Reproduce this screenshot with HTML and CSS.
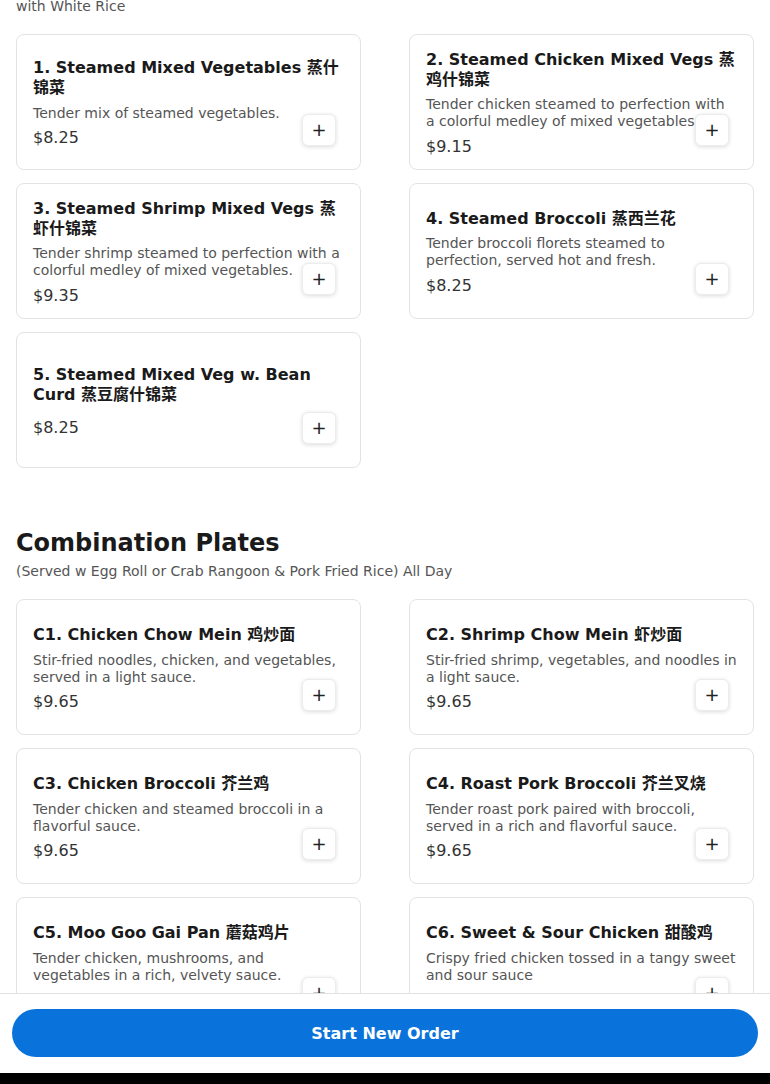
FILE: index.html
```html
<!DOCTYPE html>
<html lang="en">
<head>
<meta charset="utf-8">
<title>Menu</title>
<link rel="stylesheet" href="styles.css">
</head>
<body>
<main class="page">
  <section class="section section-first">
    <p class="section-sub sub-tail">with White Rice</p>
    <div class="grid">
      <article class="card">
        <h3 class="item-name">1. Steamed Mixed Vegetables <span class="zh" lang="zh">蒸什锦菜</span></h3>
        <p class="item-desc">Tender mix of steamed vegetables.</p>
        <p class="item-price">$8.25</p>
        <button class="add-btn" aria-label="Add">+</button>
      </article>
      <article class="card">
        <h3 class="item-name">2. Steamed Chicken Mixed Vegs <span class="zh" lang="zh">蒸鸡什锦菜</span></h3>
        <p class="item-desc">Tender chicken steamed to perfection with a colorful medley of mixed vegetables.</p>
        <p class="item-price">$9.15</p>
        <button class="add-btn" aria-label="Add">+</button>
      </article>
      <article class="card">
        <h3 class="item-name">3. Steamed Shrimp Mixed Vegs <span class="zh" lang="zh">蒸虾什锦菜</span></h3>
        <p class="item-desc">Tender shrimp steamed to perfection with a colorful medley of mixed vegetables.</p>
        <p class="item-price">$9.35</p>
        <button class="add-btn" aria-label="Add">+</button>
      </article>
      <article class="card">
        <h3 class="item-name">4. Steamed Broccoli <span class="zh" lang="zh">蒸西兰花</span></h3>
        <p class="item-desc">Tender broccoli florets steamed to perfection, served hot and fresh.</p>
        <p class="item-price">$8.25</p>
        <button class="add-btn" aria-label="Add">+</button>
      </article>
      <article class="card">
        <h3 class="item-name">5. Steamed Mixed Veg w. Bean Curd <span class="zh" lang="zh">蒸豆腐什锦菜</span></h3>
        <p class="item-desc"></p>
        <p class="item-price">$8.25</p>
        <button class="add-btn" aria-label="Add">+</button>
      </article>
    </div>
  </section>

  <section class="section">
    <h2 class="section-title">Combination Plates</h2>
    <p class="section-sub">(Served w Egg Roll or Crab Rangoon &amp; Pork Fried Rice) All Day</p>
    <div class="grid">
      <article class="card">
        <h3 class="item-name">C1. Chicken Chow Mein <span class="zh" lang="zh">鸡炒面</span></h3>
        <p class="item-desc">Stir-fried noodles, chicken, and vegetables, served in a light sauce.</p>
        <p class="item-price">$9.65</p>
        <button class="add-btn" aria-label="Add">+</button>
      </article>
      <article class="card">
        <h3 class="item-name">C2. Shrimp Chow Mein <span class="zh" lang="zh">虾炒面</span></h3>
        <p class="item-desc">Stir-fried shrimp, vegetables, and noodles in a light sauce.</p>
        <p class="item-price">$9.65</p>
        <button class="add-btn" aria-label="Add">+</button>
      </article>
      <article class="card">
        <h3 class="item-name">C3. Chicken Broccoli <span class="zh" lang="zh">芥兰鸡</span></h3>
        <p class="item-desc">Tender chicken and steamed broccoli in a flavorful sauce.</p>
        <p class="item-price">$9.65</p>
        <button class="add-btn" aria-label="Add">+</button>
      </article>
      <article class="card">
        <h3 class="item-name">C4. Roast Pork Broccoli <span class="zh" lang="zh">芥兰叉烧</span></h3>
        <p class="item-desc">Tender roast pork paired with broccoli, served in a rich and flavorful sauce.</p>
        <p class="item-price">$9.65</p>
        <button class="add-btn" aria-label="Add">+</button>
      </article>
      <article class="card">
        <h3 class="item-name">C5. Moo Goo Gai Pan <span class="zh" lang="zh">蘑菇鸡片</span></h3>
        <p class="item-desc">Tender chicken, mushrooms, and vegetables in a rich, velvety sauce.</p>
        <p class="item-price">$9.65</p>
        <button class="add-btn" aria-label="Add">+</button>
      </article>
      <article class="card">
        <h3 class="item-name">C6. Sweet &amp; Sour Chicken <span class="zh" lang="zh">甜酸鸡</span></h3>
        <p class="item-desc">Crispy fried chicken tossed in a tangy sweet and sour sauce</p>
        <p class="item-price">$9.65</p>
        <button class="add-btn" aria-label="Add">+</button>
      </article>
    </div>
  </section>
</main>

<footer class="order-bar">
  <div class="order-bar-inner">
    <button class="order-btn">Start New Order</button>
  </div>
  <div class="order-bar-edge"></div>
</footer>
</body>
</html>
```

FILE: styles.css
```css
* {
  box-sizing: border-box;
}

html, body {
  margin: 0;
  padding: 0;
  background: #ffffff;
}

body {
  font-family: "DejaVu Sans", "Noto Sans CJK SC", sans-serif;
  color: #1a1a1a;
}

.page {
  padding: 0 16px 140px;
}

.section {
  margin-bottom: 60px;
}

.section-first .sub-tail {
  margin-top: -2px;
}

.section-title {
  margin: 0;
  font-size: 24px;
  line-height: 30px;
  font-weight: bold;
  color: #1a1a1a;
}

.section-sub {
  margin: 5px 0 19px;
  font-size: 14px;
  line-height: 17.5px;
  color: #555555;
}

.sub-tail {
  margin-bottom: 18px;
}

.grid {
  display: grid;
  grid-template-columns: 1fr 1fr;
  column-gap: 48px;
  row-gap: 13px;
}

.card {
  position: relative;
  min-height: 136px;
  padding: 15px 16px 12px;
  border: 1px solid #e3e3e3;
  border-radius: 8px;
  background: #ffffff;
  display: flex;
  flex-direction: column;
  justify-content: center;
  gap: 6.5px;
}

.item-name {
  margin: 0;
  font-size: 16px;
  line-height: 20px;
  font-weight: bold;
  color: #1a1a1a;
}

.zh {
  font-family: "Noto Sans CJK SC", sans-serif;
  line-height: 1;
}

.item-desc {
  margin: 0;
  font-size: 14px;
  line-height: 17px;
  color: #555555;
}

.item-price {
  margin: 0;
  font-size: 16px;
  line-height: 20px;
  color: #333333;
}

.add-btn {
  position: absolute;
  right: 24px;
  bottom: 23px;
  width: 34px;
  height: 32px;
  padding: 0;
  border: 1px solid #ececec;
  border-radius: 6px;
  background: #ffffff;
  box-shadow: 0 1px 4px rgba(0, 0, 0, 0.14);
  font-family: "DejaVu Sans", sans-serif;
  font-size: 18px;
  line-height: 30px;
  color: #222222;
  cursor: pointer;
}

.order-bar {
  position: fixed;
  left: 0;
  right: 0;
  bottom: 0;
  background: #ffffff;
  border-top: 1px solid #e2e2e2;
}

.order-bar-inner {
  padding: 15px 12px 16px;
}

.order-btn {
  display: block;
  width: 100%;
  height: 48px;
  border: none;
  border-radius: 24px;
  background: #0a73db;
  color: #ffffff;
  font-family: "DejaVu Sans", sans-serif;
  font-size: 16px;
  font-weight: bold;
  cursor: pointer;
}

.order-bar-edge {
  height: 11px;
  background: #000000;
}
```
